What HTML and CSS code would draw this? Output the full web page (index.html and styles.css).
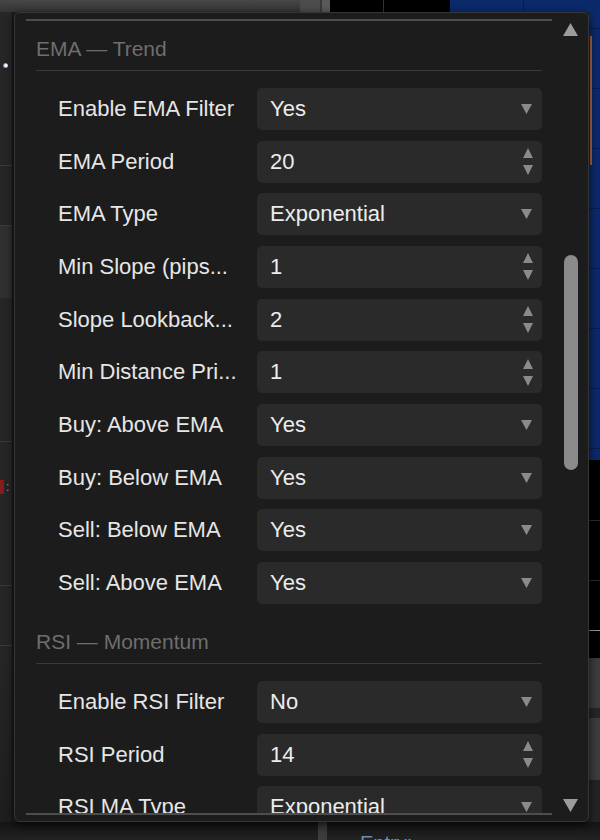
FILE: index.html
```html
<!DOCTYPE html>
<html lang="en">
<head>
<meta charset="utf-8">
<title>EA Settings</title>
<link rel="stylesheet" href="styles.css">
</head>
<body>
  <div class="top-strip">
    <div class="ts-gray"></div>
    <div class="ts-bar1"></div>
    <div class="ts-bar2"></div>
    <div class="ts-black1"></div>
    <div class="ts-black2"></div>
    <div class="ts-blue1"></div>
    <div class="ts-blue2"></div>
  </div>

  <div class="left-strip">
    <div class="ls-a"><span class="dot"></span></div>
    <div class="ls-b"></div>
    <div class="ls-c"></div>
    <div class="ls-d"></div>
    <div class="ls-e"></div>
    <div class="ls-f"><span class="marker"></span><span class="colon">:</span></div>
    <div class="ls-g"></div>
    <div class="ls-h"></div>
    <div class="ls-i"></div>
  </div>

  <div class="panel">
    <div class="viewport">
      <section class="section">
        <h2 class="section-title">EMA — Trend</h2>
        <div class="rows">
          <div class="row"><span class="label">Enable EMA Filter</span><div class="field"><span>Yes</span><svg class="caret" width="11" height="10" viewBox="0 0 11 10"><path d="M0 0H11L5.5 10Z"/></svg></div></div>
          <div class="row"><span class="label">EMA Period</span><div class="field spin"><span>20</span><svg class="spinner" width="10" height="27" viewBox="0 0 10 27"><path d="M5 0L10 10H0Z M0 17H10L5 27Z"/></svg></div></div>
          <div class="row"><span class="label">EMA Type</span><div class="field"><span>Exponential</span><svg class="caret" width="11" height="10" viewBox="0 0 11 10"><path d="M0 0H11L5.5 10Z"/></svg></div></div>
          <div class="row"><span class="label">Min Slope (pips...</span><div class="field spin"><span>1</span><svg class="spinner" width="10" height="27" viewBox="0 0 10 27"><path d="M5 0L10 10H0Z M0 17H10L5 27Z"/></svg></div></div>
          <div class="row"><span class="label">Slope Lookback...</span><div class="field spin"><span>2</span><svg class="spinner" width="10" height="27" viewBox="0 0 10 27"><path d="M5 0L10 10H0Z M0 17H10L5 27Z"/></svg></div></div>
          <div class="row"><span class="label">Min Distance Pri...</span><div class="field spin"><span>1</span><svg class="spinner" width="10" height="27" viewBox="0 0 10 27"><path d="M5 0L10 10H0Z M0 17H10L5 27Z"/></svg></div></div>
          <div class="row"><span class="label">Buy: Above EMA</span><div class="field"><span>Yes</span><svg class="caret" width="11" height="10" viewBox="0 0 11 10"><path d="M0 0H11L5.5 10Z"/></svg></div></div>
          <div class="row"><span class="label">Buy: Below EMA</span><div class="field"><span>Yes</span><svg class="caret" width="11" height="10" viewBox="0 0 11 10"><path d="M0 0H11L5.5 10Z"/></svg></div></div>
          <div class="row"><span class="label">Sell: Below EMA</span><div class="field"><span>Yes</span><svg class="caret" width="11" height="10" viewBox="0 0 11 10"><path d="M0 0H11L5.5 10Z"/></svg></div></div>
          <div class="row"><span class="label">Sell: Above EMA</span><div class="field"><span>Yes</span><svg class="caret" width="11" height="10" viewBox="0 0 11 10"><path d="M0 0H11L5.5 10Z"/></svg></div></div>
        </div>
      </section>
      <section class="section">
        <h2 class="section-title">RSI — Momentum</h2>
        <div class="rows">
          <div class="row"><span class="label">Enable RSI Filter</span><div class="field"><span>No</span><svg class="caret" width="11" height="10" viewBox="0 0 11 10"><path d="M0 0H11L5.5 10Z"/></svg></div></div>
          <div class="row"><span class="label">RSI Period</span><div class="field spin"><span>14</span><svg class="spinner" width="10" height="27" viewBox="0 0 10 27"><path d="M5 0L10 10H0Z M0 17H10L5 27Z"/></svg></div></div>
          <div class="row"><span class="label">RSI MA Type</span><div class="field"><span>Exponential</span><svg class="caret" width="11" height="10" viewBox="0 0 11 10"><path d="M0 0H11L5.5 10Z"/></svg></div></div>
        </div>
      </section>
    </div>
    <div class="scrollbar">
      <svg class="sb-arrow" width="15" height="13" viewBox="0 0 15 13"><path d="M7.5 0L15 13H0Z"/></svg>
      <div class="thumb"></div>
      <svg class="sb-arrow down" width="15" height="13" viewBox="0 0 15 13"><path d="M0 0H15L7.5 13Z"/></svg>
    </div>
  </div>

  <div class="right-strip">
    <div class="rs-blue"><span class="orange"></span></div>
    <div class="rs-black"></div>
    <div class="rs-gray1"></div>
    <div class="rs-dark"></div>
    <div class="rs-gray2"></div>
    <div class="rs-end"></div>
  </div>

  <div class="bottom-strip">
    <div class="bs-left"></div>
    <div class="bs-bar"></div>
    <div class="bs-text">Entry:</div>
  </div>
</body>
</html>
```

FILE: styles.css
```css
html, body {
  margin: 0;
  padding: 0;
}

body {
  width: 600px;
  height: 840px;
  overflow: hidden;
  display: grid;
  grid-template-columns: 14px 575px 11px;
  grid-template-rows: 12px 810px 18px;
  background: #232323;
  font-family: "Liberation Sans", Arial, sans-serif;
}

/* ---------- background app strips ---------- */
.top-strip {
  grid-column: 1 / 4;
  grid-row: 1;
  display: flex;
  overflow: hidden;
}
.ts-gray { width: 300px; background: linear-gradient(#474747, #343434); }
.ts-bar1 { width: 20px; background: #4c4c4c; border-right: 2px solid #3a3a3a; }
.ts-bar2 { width: 8px; background: #5a5a5a; }
.ts-black1 { width: 53px; background: #000; border-right: 1px solid #333; }
.ts-black2 { width: 66px; background: #000; }
.ts-blue1 { width: 73px; background: #0b2a6c; border-right: 1px solid #061d4d; }
.ts-blue2 { flex: 1; background: #0b2a6c; }

.left-strip {
  grid-column: 1;
  grid-row: 2;
  display: flex;
  flex-direction: column;
  background: #262626;
  border-right: 2px solid #1a1a1a;
  overflow: hidden;
}
.ls-a { height: 88px; display: flex; align-items: flex-end; padding-left: 3px; }
.dot {
  width: 5px;
  height: 5px;
  border-radius: 50%;
  margin-bottom: 32px;
  background: radial-gradient(circle at 60% 50%, #ffffff 30%, #6d8fd8 60%, #b08a5a 100%);
}
.ls-b { height: 65px; border-bottom: 1px solid #3b3b3b; }
.ls-c { height: 59px; border-bottom: 1px solid #3b3b3b; }
.ls-d { height: 72px; background: #303030; }
.ls-e { height: 143px; border-bottom: 1px solid #3b3b3b; }
.ls-f {
  height: 78px;
  box-sizing: border-box;
  display: flex;
  align-items: flex-start;
  gap: 2px;
  padding-top: 38px;
}
.marker { width: 4px; height: 14px; background: #8c1a1a; }
.colon { color: #9a9a9a; font-size: 12px; line-height: 14px; }
.ls-g { height: 65px; border-bottom: 1px solid #3b3b3b; }
.ls-h { height: 59px; border-bottom: 1px solid #3b3b3b; }
.ls-i { flex: 1; background: linear-gradient(#262626, #1e1e1e); }

.right-strip {
  grid-column: 3;
  grid-row: 2;
  display: flex;
  flex-direction: column;
  overflow: hidden;
}
.rs-blue {
  height: 448px;
  background:
    repeating-linear-gradient(to bottom, transparent 0 16px, #071f52 16px 17px, transparent 17px 60px),
    #0b2a6c;
}
.orange {
  display: block;
  width: 2px;
  height: 129px;
  margin-top: 24px;
  margin-left: 1px;
  background: #b8653d;
}
.rs-black {
  height: 198px;
  background:
    linear-gradient(to bottom, transparent 0 60px, #2b2b2b 60px 61px, transparent 61px 120px, #2b2b2b 120px 121px, transparent 121px 170px, #9a9a9a 170px 171px, transparent 171px),
    #000;
}
.rs-gray1 { height: 50px; background: #3d3d3d; }
.rs-dark { height: 10px; background: #262626; }
.rs-gray2 { height: 62px; background: #3d3d3d; }
.rs-end { flex: 1; background: #242424; }

.bottom-strip {
  grid-column: 1 / 4;
  grid-row: 3;
  display: flex;
  overflow: hidden;
  background: linear-gradient(#151515, #222222);
}
.bs-left { width: 318px; }
.bs-bar { width: 9px; background: #3c3c3c; }
.bs-text {
  margin-left: 33px;
  padding-top: 9px;
  font-size: 20px;
  line-height: 24px;
  color: #6f8fb2;
}

/* ---------- settings panel ---------- */
.panel {
  grid-column: 2;
  grid-row: 2;
  position: relative;
  z-index: 1;
  display: flex;
  background: #1c1c1c;
  border: 1px solid #363636;
  border-radius: 6px;
  box-shadow: 0 3px 10px rgba(0, 0, 0, 0.75);
  overflow: hidden;
}

.viewport {
  width: 526px;
  margin: 6px 0 6px 11px;
  border-top: 2px solid #4d4d4d;
  border-bottom: 2px solid #4d4d4d;
  overflow: hidden;
}

.section {
  padding: 14px 10px 12px;
}
.section:first-child {
  padding-top: 16px;
}

.section-title {
  margin: 0 0 17px;
  padding-bottom: 9px;
  border-bottom: 1px solid #3a3a3a;
  font-size: 21px;
  line-height: 24px;
  font-weight: normal;
  color: #6e6e6e;
}

.rows {
  display: flex;
  flex-direction: column;
  gap: 10.67px;
  padding-left: 22px;
}

.row {
  display: grid;
  grid-template-columns: 187px 1fr;
  column-gap: 12px;
  align-items: center;
  height: 42px;
}

.label {
  font-size: 22px;
  line-height: 26px;
  color: #e6e6e6;
  white-space: nowrap;
  overflow: hidden;
}

.field {
  height: 42px;
  box-sizing: border-box;
  display: flex;
  align-items: center;
  justify-content: space-between;
  padding: 0 10px 0 13px;
  background: #2a2a2a;
  border-radius: 5px;
  font-size: 22px;
  color: #ececec;
}
.field.spin { padding-right: 9px; }

.caret, .spinner { fill: #8a8a8a; flex: none; }

/* ---------- scrollbar ---------- */
.scrollbar {
  flex: 1;
  display: flex;
  flex-direction: column;
  align-items: center;
  padding: 10px 0 9px 1px;
}
.sb-arrow { fill: #9c9c9c; flex: none; }
.sb-arrow.down { margin-top: auto; }
.thumb {
  width: 14px;
  height: 215px;
  margin-top: 219px;
  border-radius: 7px;
  background: #8b8b8b;
}
```
